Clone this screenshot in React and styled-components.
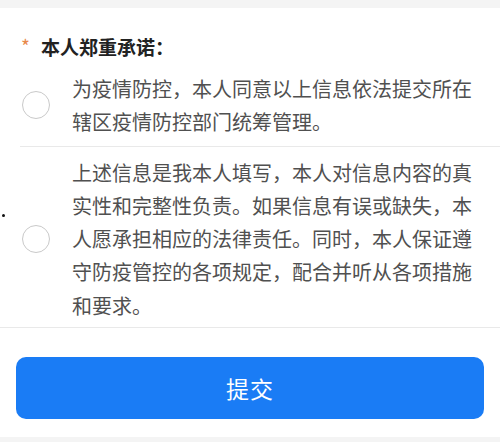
import React, { useState } from "react";
import styled, { createGlobalStyle } from "styled-components";

const Global = createGlobalStyle`
  html, body { margin: 0; padding: 0; background: #f4f4f4; }
  body { font-family: "Noto Sans CJK SC", "Noto Sans", sans-serif; }
`;

const Page = styled.div`
  width: 500px;
  height: 442px;
  padding-top: 8px;
  box-sizing: border-box;
  background: #f4f4f4;
`;

const Panel = styled.div`
  background: #ffffff;
  height: 429px;
  display: flex;
  flex-direction: column;
`;

const Title = styled.div`
  display: flex;
  align-items: center;
  padding: 27px 0 4px 21px;
  font-size: 19px;
  line-height: 24px;
  font-weight: 700;
  color: #222;
`;

const Star = styled.span`
  color: #e8884a;
  font-size: 19px;
  font-weight: 400;
  margin-right: 11px;
  position: relative;
  top: -1px;
`;

const List = styled.div`
  display: flex;
  flex-direction: column;
`;

const Row = styled.label`
  position: relative;
  display: flex;
  align-items: center;
  gap: 22px;
  padding: 9px 20px ${(p) => p.$pb}px 0;
  margin-left: ${(p) => p.$inset}px;
  padding-left: ${(p) => 22 - p.$inset}px;
  border-bottom: 1px solid #e9e9e9;
  cursor: pointer;
`;

const Circle = styled.span`
  flex: 0 0 auto;
  width: 28px;
  height: 28px;
  box-sizing: border-box;
  border-radius: 50%;
  border: 1.5px solid ${(p) => (p.$on ? "#1a7cf5" : "#c9c9c9")};
  background: ${(p) => (p.$on ? "#1a7cf5" : "#fff")};
`;

const Text = styled.div`
  font-size: 20px;
  line-height: 33.3px;
  color: #505050;
  width: 408px;
`;

const Dot = styled.span`
  position: absolute;
  left: 2px;
  top: 67px;
  width: 3px;
  height: 3px;
  border-radius: 50%;
  background: #111;
`;

const Footer = styled.div`
  padding: 29px 16px 0;
`;

const Button = styled.button`
  width: 100%;
  height: 62px;
  border: none;
  border-radius: 10px;
  background: #1a7cf5;
  color: #fff;
  font-family: inherit;
  font-size: 23px;
  letter-spacing: 1px;
  cursor: pointer;
`;

const items = [
  "为疫情防控，本人同意以上信息依法提交所在辖区疫情防控部门统筹管理。",
  "上述信息是我本人填写，本人对信息内容的真实性和完整性负责。如果信息有误或缺失，本人愿承担相应的法律责任。同时，本人保证遵守防疫管控的各项规定，配合并听从各项措施和要求。",
];

export default function App() {
  const [checked, setChecked] = useState([false, false]);
  return (
    <>
      <Global />
      <Page>
        <Panel>
          <Title>
            <Star>*</Star>本人郑重承诺：
          </Title>
          <List>
            {items.map((t, i) => (
              <Row
                key={i}
                $inset={i === 0 ? 20 : 0}
                $pb={i === 0 ? 7 : 5}
                onClick={() =>
                  setChecked((c) => c.map((v, j) => (j === i ? !v : v)))
                }
              >
                {i === 1 && <Dot />}
                <Circle $on={checked[i]} />
                <Text>{t}</Text>
              </Row>
            ))}
          </List>
          <Footer>
            <Button>提交</Button>
          </Footer>
        </Panel>
      </Page>
    </>
  );
}
